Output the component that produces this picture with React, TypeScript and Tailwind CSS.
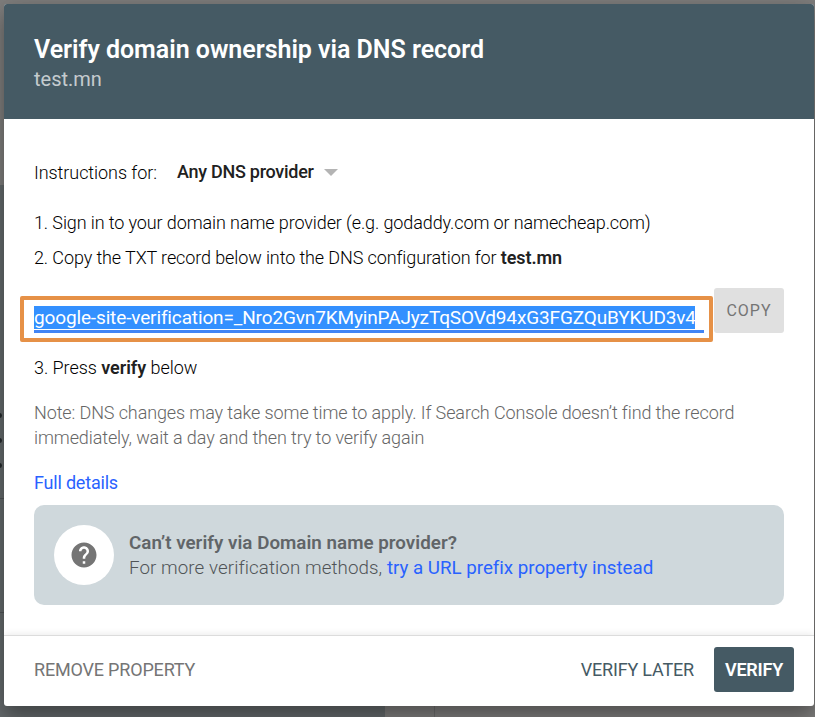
import { useState } from 'react';

const RECORD = 'google-site-verification=_Nro2Gvn7KMyinPAJyzTqSOVd94xG3FGZQuBYKUD3v4';

// Dimmed console page that stays visible around the edges of the dialog
function Backdrop() {
  return (
    <div className="absolute inset-0 flex flex-col bg-[#7f7e7d]">
      <div className="h-[185px]" />
      <div className="flex flex-1">
        <div className="flex w-[385px] flex-col bg-[#656a6c]">
          <div className="mt-[228px] flex flex-col gap-5">
            <span className="-ml-[3px] h-[5px] w-[5px] rounded-full bg-[#242a2d]" />
            <span className="-ml-[3px] h-[5px] w-[5px] rounded-full bg-[#242a2d]" />
            <span className="-ml-[3px] h-[5px] w-[5px] rounded-full bg-[#242a2d]" />
          </div>
          <div className="mt-[30px] h-[115px] border-y border-[#505557]" />
        </div>
        <div className="w-[50px] border-r border-[#6d6d6d]" />
      </div>
    </div>
  );
}

function Header() {
  return (
    <header className="h-[115px] bg-[#455a64] px-[30px] pt-[31px]">
      <h1 className="text-[25px] leading-[30px] font-semibold tracking-[-0.03px] text-white">
        Verify domain ownership via DNS record
      </h1>
      <p className="text-[20px] leading-[28px] text-white/70">test.mn</p>
    </header>
  );
}

function HelpCard() {
  return (
    <div className="mt-[10px] flex h-[100px] items-center rounded-[10px] bg-[#cfd8dc] px-5">
      <div className="flex h-[60px] w-[60px] items-center justify-center rounded-full bg-white">
        <svg className="h-[30px] w-[30px]" viewBox="0 0 24 24" fill="#757575">
          <path d="M12 2C6.48 2 2 6.48 2 12s4.48 10 10 10 10-4.48 10-10S17.52 2 12 2zm1 17h-2v-2h2v2zm2.07-7.75l-.9.92C13.45 12.9 13 13.5 13 15h-2v-.5c0-1.1.45-2.1 1.17-2.83l1.24-1.26c.37-.36.59-.86.59-1.41 0-1.1-.9-2-2-2s-2 .9-2 2H8c0-2.21 1.79-4 4-4s4 1.79 4 4c0 .88-.36 1.68-.93 2.25z" />
        </svg>
      </div>
      <div className="ml-[15px] pt-[2px] text-[18.75px] leading-[25px] text-[#616568]">
        <p className="font-semibold tracking-[0.03px]">Can’t verify via Domain name provider?</p>
        <p className="font-light tracking-[0.08px] text-[#505457]">
          For more verification methods,{' '}
          <a className="font-normal tracking-[-0.02px] text-[#2962ff]">try a URL prefix property instead</a>
        </p>
      </div>
    </div>
  );
}

export default function App() {
  const [provider] = useState('Any DNS provider');

  return (
    <div className="relative h-[717px] w-[815px] overflow-hidden pt-1 pl-1 font-[Roboto,sans-serif]">
      <Backdrop />
      <div className="relative flex h-[702px] w-[810px] flex-col overflow-hidden rounded-[3px] bg-white shadow-[0_11px_19px_rgba(0,0,0,0.3),0_0_30px_rgba(0,0,0,0.12)]">
        <Header />

        <main className="flex-1 px-[30px] pt-[35px] text-[18px] leading-[25px] font-light tracking-[-0.11px] text-black">
          <div className="flex h-9 items-center">
            <span className="tracking-[-0.07px]">Instructions for:</span>
            <span className="ml-5 pb-[2px] font-medium tracking-[-0.26px] text-[#212121]">{provider}</span>
            <span className="ml-[10px] border-x-[7px] border-t-[7px] border-x-transparent border-t-[#b4b4b4]" />
          </div>

          <p className="mt-5">1. Sign in to your domain name provider (e.g. godaddy.com or namecheap.com)</p>
          <p className="mt-[10px]">
            2. Copy the TXT record below into the DNS configuration for{' '}
            <b className="font-semibold text-[#212121]">test.mn</b>
          </p>

          <div className="mt-[18px] flex gap-px">
            <div className="mt-2 -ml-[14px] h-[46px] w-[693px] rounded-[2px] border-4 border-[#e69147] pt-[6px] pr-[5px] pl-[10px]">
              <div className="border-b-[3px] border-[#4285f4] pb-px">
                <span className="block h-[23px] w-[661px] bg-[#3390ff] text-[19px] leading-[23px] font-normal tracking-[-0.14px] whitespace-nowrap text-white">
                  {RECORD}
                </span>
              </div>
            </div>
            <button className="h-[45px] w-[70px] rounded-[3px] bg-[#e0e0e0] text-[16px] font-normal tracking-[1px] text-[#757575]">
              COPY
            </button>
          </div>

          <p className="mt-[13px] tracking-[-0.04px]">
            3. Press <b className="font-semibold text-[#212121]">verify</b> below
          </p>
          <p className="mt-5 text-[#666666]">
            Note: DNS changes may take some time to apply. If Search Console doesn’t find the record immediately, wait
            a day and then try to verify again
          </p>
          <a className="mt-5 block font-normal tracking-[-0.2px] text-[#2962ff]">Full details</a>

          <HelpCard />
        </main>

        <footer className="flex h-[71px] items-center border-t border-[#dcdcdc] pr-5 pb-[4px] pl-[30px] text-[18px] tracking-[-0.18px] text-[#455a64] shadow-[0_0_8px_rgba(0,0,0,0.1)]">
          <button className="text-[#757575]">REMOVE PROPERTY</button>
          <button className="mr-5 ml-auto">VERIFY LATER</button>
          <button className="h-[45px] w-20 rounded-[3px] bg-[#455a64] font-semibold tracking-[-0.25px] text-white">
            VERIFY
          </button>
        </footer>
      </div>
    </div>
  );
}
